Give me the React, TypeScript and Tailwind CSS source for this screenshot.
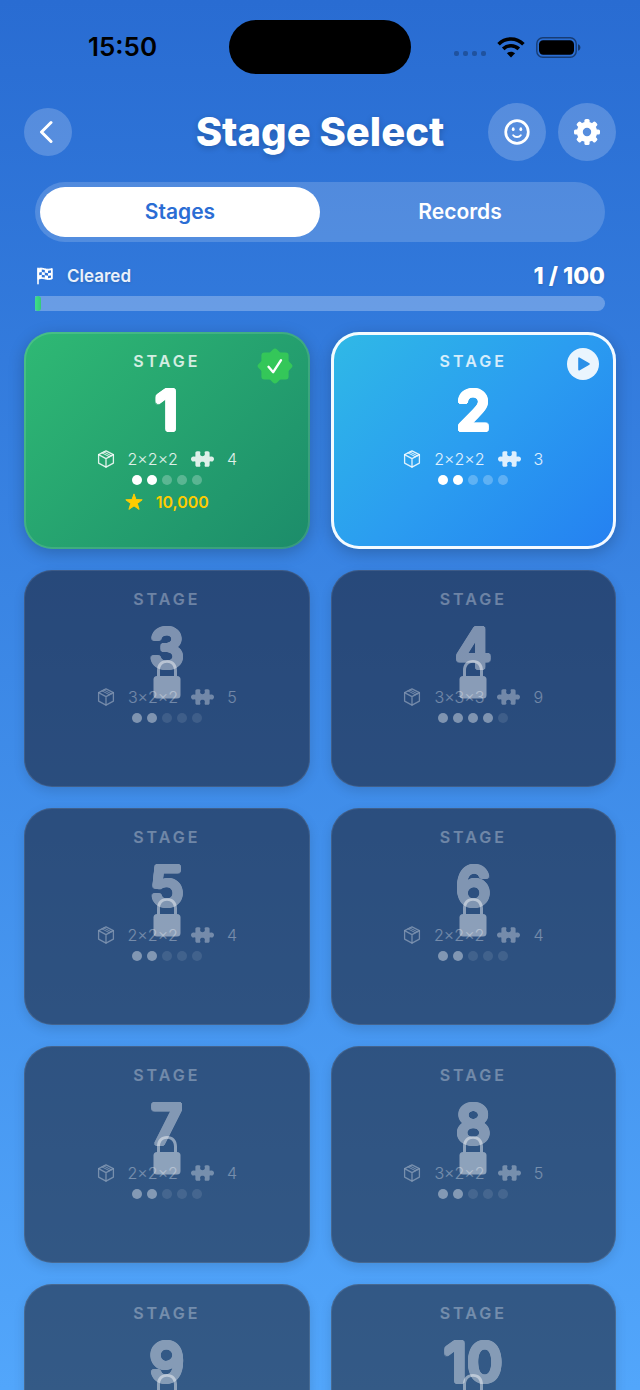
import { useState } from 'react';

type Status = 'cleared' | 'current' | 'locked';

interface Stage {
    id: number;
    size: string;
    pieces: number;
    level: number;
    status: Status;
    score?: string;
}

const TOTAL = 100;

const stages: Stage[] = [
    { id: 1, size: '2×2×2', pieces: 4, level: 2, status: 'cleared', score: '10,000' },
    { id: 2, size: '2×2×2', pieces: 3, level: 2, status: 'current' },
    { id: 3, size: '3×2×2', pieces: 5, level: 2, status: 'locked' },
    { id: 4, size: '3×3×3', pieces: 9, level: 4, status: 'locked' },
    { id: 5, size: '2×2×2', pieces: 4, level: 2, status: 'locked' },
    { id: 6, size: '2×2×2', pieces: 4, level: 2, status: 'locked' },
    { id: 7, size: '2×2×2', pieces: 4, level: 2, status: 'locked' },
    { id: 8, size: '3×2×2', pieces: 5, level: 2, status: 'locked' },
    { id: 9, size: '3×2×2', pieces: 5, level: 2, status: 'locked' },
    { id: 10, size: '3×3×3', pieces: 8, level: 3, status: 'locked' },
];

const cardStyles: Record<Status, string> = {
    cleared: 'bg-linear-135 from-[#2fb974] to-[#1c8c6a] inset-ring-2 inset-ring-white/12 shadow-[0_4px_16px_rgba(0,0,0,0.22)]',
    current: 'bg-linear-135 from-[#30b9e6] via-[#2b9df0] to-[#2580f1] inset-ring-3 inset-ring-white/95 shadow-[0_4px_16px_rgba(0,0,0,0.22)]',
    locked: 'bg-[#150e12]/50 inset-ring-1 inset-ring-white/10 shadow-[0_4px_12px_rgba(0,0,0,0.12)]',
};

function CubeIcon() {
    return (
        <svg width="18" height="18" viewBox="0 0 18 18" fill="none" stroke="currentColor" strokeWidth="1.3" strokeLinejoin="round" strokeLinecap="round">
            <path d="M9 0.9 16.4 4.7V13.1L9 17.1 1.6 13.1V4.7Z" />
            <path d="M1.6 4.7 9 8.6 16.4 4.7M9 8.6V17.1" />
            <path d="M5 2.9 12.6 6.8M6.9 2 14.4 5.8" strokeWidth="1" />
        </svg>
    );
}

function PuzzleIcon() {
    return (
        <svg width="23" height="16" viewBox="0 0 23 16" fill="currentColor">
            <path d="M6.2 0.3H8C9.3 0.3 9.6 1.1 9.3 2.1C8.9 3.3 9.1 5.2 11.5 5.2C13.9 5.2 14.1 3.3 13.7 2.1C13.4 1.1 13.7 0.3 15 0.3H16.8C18 0.3 18.6 1 18.6 2.1V4.9C18.6 5.7 19.1 5.9 19.7 5.6C21.4 4.9 23 6.2 23 8C23 9.8 21.4 11.1 19.7 10.4C19.1 10.1 18.6 10.3 18.6 11.1V13.9C18.6 15 18 15.7 16.8 15.7H15C13.7 15.7 13.4 14.9 13.7 13.9C14.1 12.7 13.9 10.8 11.5 10.8C9.1 10.8 8.9 12.7 9.3 13.9C9.6 14.9 9.3 15.7 8 15.7H6.2C5 15.7 4.4 15 4.4 13.9V11.1C4.4 10.3 3.9 10.1 3.3 10.4C1.6 11.1 0 9.8 0 8C0 6.2 1.6 4.9 3.3 5.6C3.9 5.9 4.4 5.7 4.4 4.9V2.1C4.4 1 5 0.3 6.2 0.3Z" />
        </svg>
    );
}

function StarIcon() {
    return (
        <svg width="18" height="18" viewBox="0 0 18 18" fill="currentColor" stroke="currentColor" strokeWidth="1" strokeLinejoin="round">
            <path d="M9 0.9 11 6.6 17.2 6.8 12.3 10.5 14.1 16.4 9 12.9 3.9 16.4 5.7 10.5 0.8 6.8 7 6.6Z" />
        </svg>
    );
}

function LockIcon() {
    return (
        <svg width="28" height="40" viewBox="0 0 28 40" fill="none">
            <path d="M4 17V11.5C4 5 8 1 14 1S24 5 24 11.5V17H21V11.5C21 6.8 18.2 3.8 14 3.8S7 6.8 7 11.5V17Z" fill="white" />
            <rect x="0.5" y="17" width="27" height="22.5" rx="3.5" fill="white" />
        </svg>
    );
}

function SealIcon() {
    return (
        <svg width="36" height="36" viewBox="0 0 36 36" fill="none">
            <rect x="4.4" y="4.4" width="27.2" height="27.2" rx="3" fill="#34c759" />
            <rect x="4.9" y="4.9" width="26.2" height="26.2" rx="3" fill="#34c759" transform="rotate(45 18 18)" />
            <path d="M11.5 18.8 16.2 24.2 24 12.2" stroke="white" strokeWidth="2.4" strokeLinecap="round" strokeLinejoin="round" />
        </svg>
    );
}

function PlayBadge() {
    return (
        <svg width="32" height="32" viewBox="0 0 32 32">
            <circle cx="16" cy="16" r="16" fill="white" fillOpacity="0.9" />
            <path d="M12 10.2V21.8L22 16Z" fill="#2b90e8" stroke="#2b90e8" strokeWidth="1.6" strokeLinejoin="round" />
        </svg>
    );
}

function SmileIcon() {
    return (
        <svg width="26" height="26" viewBox="0 0 26 26" fill="none" stroke="white" strokeLinecap="round">
            <circle cx="13" cy="13" r="11.3" strokeWidth="2.7" />
            <ellipse cx="9.2" cy="10.2" rx="1.4" ry="1.9" fill="white" stroke="none" />
            <ellipse cx="16.8" cy="10.2" rx="1.4" ry="1.9" fill="white" stroke="none" />
            <path d="M9.2 16.2C11 18.6 15 18.6 16.8 16.2" strokeWidth="1.9" />
        </svg>
    );
}

function GearIcon() {
    return (
        <svg width="26" height="26" viewBox="0 0 26 26" fill="none" stroke="white">
            <circle cx="13" cy="13" r="7.2" strokeWidth="6" />
            {[0, 45, 90, 135, 180, 225, 270, 315].map((deg) => (
                <rect key={deg} x="10.4" y="0" width="5.2" height="6" rx="1.6" fill="white" stroke="none" transform={`rotate(${deg} 13 13)`} />
            ))}
        </svg>
    );
}

function FlagIcon() {
    return (
        <svg width="18" height="18" viewBox="0 0 18 18" fill="none">
            <path d="M3 1.4V16.8" stroke="white" strokeWidth="1.6" strokeLinecap="round" />
            <path d="M3 1.8C5.4 0.6 7.2 1.2 9.6 1.8S14.4 2.4 17.2 1.6V11.8C14.4 12.8 12 12.4 9.6 11.8S5.4 11.2 3 12.4Z" fill="white" stroke="white" strokeWidth="1" strokeLinejoin="round" />
            <path d="M6.8 2.6 9.8 3.1V5.6L6.8 5.1ZM13 3.7 16 3.3V5.8L13 6.2ZM4.2 5.6 6.8 5.1V7.8L4.2 8.3ZM9.8 5.6 13 6.2V8.8L9.8 8.2ZM6.8 7.8 9.8 8.2V10.6L6.8 10.2ZM13 8.8 16 8.5V10.8L13 11.2Z" fill="#3076da" />
        </svg>
    );
}

function WifiIcon() {
    return (
        <svg width="28" height="21" viewBox="0 0 28 21" fill="none" stroke="black">
            <path d="M1.6 7.2C8.6 0.2 19.4 0.2 26.4 7.2" strokeWidth="3.6" />
            <path d="M6.2 11.9C10.6 7.6 17.4 7.6 21.8 11.9" strokeWidth="3.6" />
            <path d="M14 20.4 9.9 16.3C12.2 14.2 15.8 14.2 18.1 16.3Z" fill="black" stroke="none" />
        </svg>
    );
}

function BatteryIcon() {
    return (
        <svg width="45" height="21" viewBox="0 0 45 21" fill="none">
            <rect x="0.8" y="0.8" width="39.4" height="19.4" rx="6" stroke="black" strokeOpacity="0.45" strokeWidth="1.4" />
            <rect x="3" y="3.2" width="35" height="14.6" rx="4.2" fill="black" />
            <path d="M42 7.2C45.2 8 45.2 13 42 13.8Z" fill="black" fillOpacity="0.5" />
        </svg>
    );
}

function StatusBar() {
    return (
        <div className="grid h-[94px] shrink-0 grid-cols-[1fr_auto_1fr] items-center px-4 text-black">
            <span className="text-center text-[26px] leading-8 font-semibold">15:50</span>
            <div className="h-[54px] w-[182px] rounded-full bg-black" />
            <div className="flex items-center justify-center gap-[11px]">
                <div className="flex gap-1 pt-3">
                    {[0, 1, 2, 3].map((i) => (
                        <span key={i} className="size-[5px] rounded-xs bg-black/25" />
                    ))}
                </div>
                <WifiIcon />
                <BatteryIcon />
            </div>
        </div>
    );
}

function StageCard({ stage }: { stage: Stage }) {
    const locked = stage.status === 'locked';

    return (
        <button
            type="button"
            disabled={locked}
            aria-label={`Stage ${stage.id}`}
            className={`relative flex min-h-[217px] flex-col items-center rounded-[28px] px-4 pt-[17px] text-white ${cardStyles[stage.status]}`}
        >
            <div className={`flex flex-col items-center ${locked ? 'opacity-40' : ''}`}>
                <span className="text-base leading-6 font-semibold tracking-[3px] text-white/80">STAGE</span>
                {/* the ring of hard shadows thickens the digits and rounds off their corners */}
                <span className="mt-2 text-[55px] leading-[58px] font-medium text-shadow-[2px_0_0_white,-2px_0_0_white,0_2px_0_white,0_-2px_0_white,2px_1px_0_white,2px_-1px_0_white,-2px_1px_0_white,-2px_-1px_0_white,1px_2px_0_white,-1px_2px_0_white,1px_-2px_0_white,-1px_-2px_0_white]">
                    {stage.id}
                </span>
                <span className="mt-2.5 flex items-center gap-[13px] text-base leading-5 font-light text-white/85">
                    <CubeIcon />
                    <span>{stage.size}</span>
                    <PuzzleIcon />
                    <span>{stage.pieces}</span>
                </span>
                <span className="mt-1.5 flex gap-[5px]">
                    {[1, 2, 3, 4, 5].map((n) => (
                        <span key={n} className={`size-2.5 rounded-full ${n <= stage.level ? 'bg-white' : 'bg-white/25'}`} />
                    ))}
                </span>
                {stage.score && (
                    <span className="mt-[7px] flex items-center gap-[13px] text-base leading-5 font-semibold text-[#ffcc00]">
                        <StarIcon />
                        <span>{stage.score}</span>
                    </span>
                )}
            </div>

            {stage.status !== 'locked' && (
                <span className="absolute top-4 right-[17px]">
                    {stage.status === 'cleared' ? <SealIcon /> : <PlayBadge />}
                </span>
            )}
            {locked && (
                <span className="absolute inset-0 flex items-center justify-center opacity-45">
                    <LockIcon />
                </span>
            )}
        </button>
    );
}

export default function App() {
    const [tab, setTab] = useState('Stages');
    const cleared = stages.filter((s) => s.status === 'cleared').length;

    return (
        <div className="flex h-screen flex-col bg-linear-to-b from-[#296cd2] to-[#52a6fb] font-['Inter',sans-serif] text-white">
            <StatusBar />

            {/* Title and round buttons */}
            <header className="mt-[9px] grid shrink-0 grid-cols-[1fr_auto_1fr] items-center px-6">
                <button type="button" aria-label="Back" className="flex size-12 items-center justify-center rounded-full bg-white/20">
                    <svg width="14" height="24" viewBox="0 0 14 24" fill="none" stroke="white" strokeWidth="3" strokeLinecap="round" strokeLinejoin="round" className="mr-1">
                        <path d="M12 2.5 2.5 12 12 21.5" />
                    </svg>
                </button>
                <h1 className="text-[40px] leading-[58px] font-extrabold text-shadow-[0_2px_6px_rgba(0,0,0,0.2)]">Stage Select</h1>
                <div className="flex justify-end gap-3">
                    <button type="button" aria-label="Profile" className="flex size-[58px] items-center justify-center rounded-full bg-white/20">
                        <SmileIcon />
                    </button>
                    <button type="button" aria-label="Settings" className="flex size-[58px] items-center justify-center rounded-full bg-white/20">
                        <GearIcon />
                    </button>
                </div>
            </header>

            {/* Tabs */}
            <div role="tablist" className="mx-[35px] mt-[21px] flex shrink-0 rounded-full bg-white/17 p-[5px]">
                {['Stages', 'Records'].map((name) => (
                    <button
                        key={name}
                        type="button"
                        role="tab"
                        aria-selected={tab === name}
                        onClick={() => setTab(name)}
                        className={`h-[50px] flex-1 rounded-full text-[21px] leading-7 font-semibold ${tab === name ? 'bg-white text-[#2b6dd4]' : 'text-white'}`}
                    >
                        {name}
                    </button>
                ))}
            </div>

            {/* Progress */}
            <div className="mx-[35px] mt-5 shrink-0">
                <div className="flex h-7 items-center justify-between">
                    <div className="flex items-center gap-3.5 text-white/90">
                        <FlagIcon />
                        <span className="text-[17px] leading-6 font-semibold text-shadow-[0_1px_3px_rgba(0,0,0,0.15)]">Cleared</span>
                    </div>
                    <span className="text-[23px] leading-7 font-extrabold text-shadow-[0_1px_3px_rgba(0,0,0,0.15)]">
                        {cleared} / {TOTAL}
                    </span>
                </div>
                <div role="progressbar" aria-label="Cleared" aria-valuenow={cleared} aria-valuemax={TOTAL} className="mt-1.5 h-[15px] rounded-r-full rounded-l-sm bg-white/27">
                    <div className="h-full rounded-full bg-linear-to-r from-[#3fde8a] to-[#35c97a]" style={{ width: `${(cleared / TOTAL) * 100}%` }} />
                </div>
            </div>

            {/* Stage grid */}
            <main className="min-h-0 flex-1 overflow-y-auto px-6 pt-[21px] pb-8 [scrollbar-width:none]">
                <div className="grid grid-cols-2 gap-[21px]">
                    {stages.map((stage) => (
                        <StageCard key={stage.id} stage={stage} />
                    ))}
                </div>
            </main>
        </div>
    );
}
